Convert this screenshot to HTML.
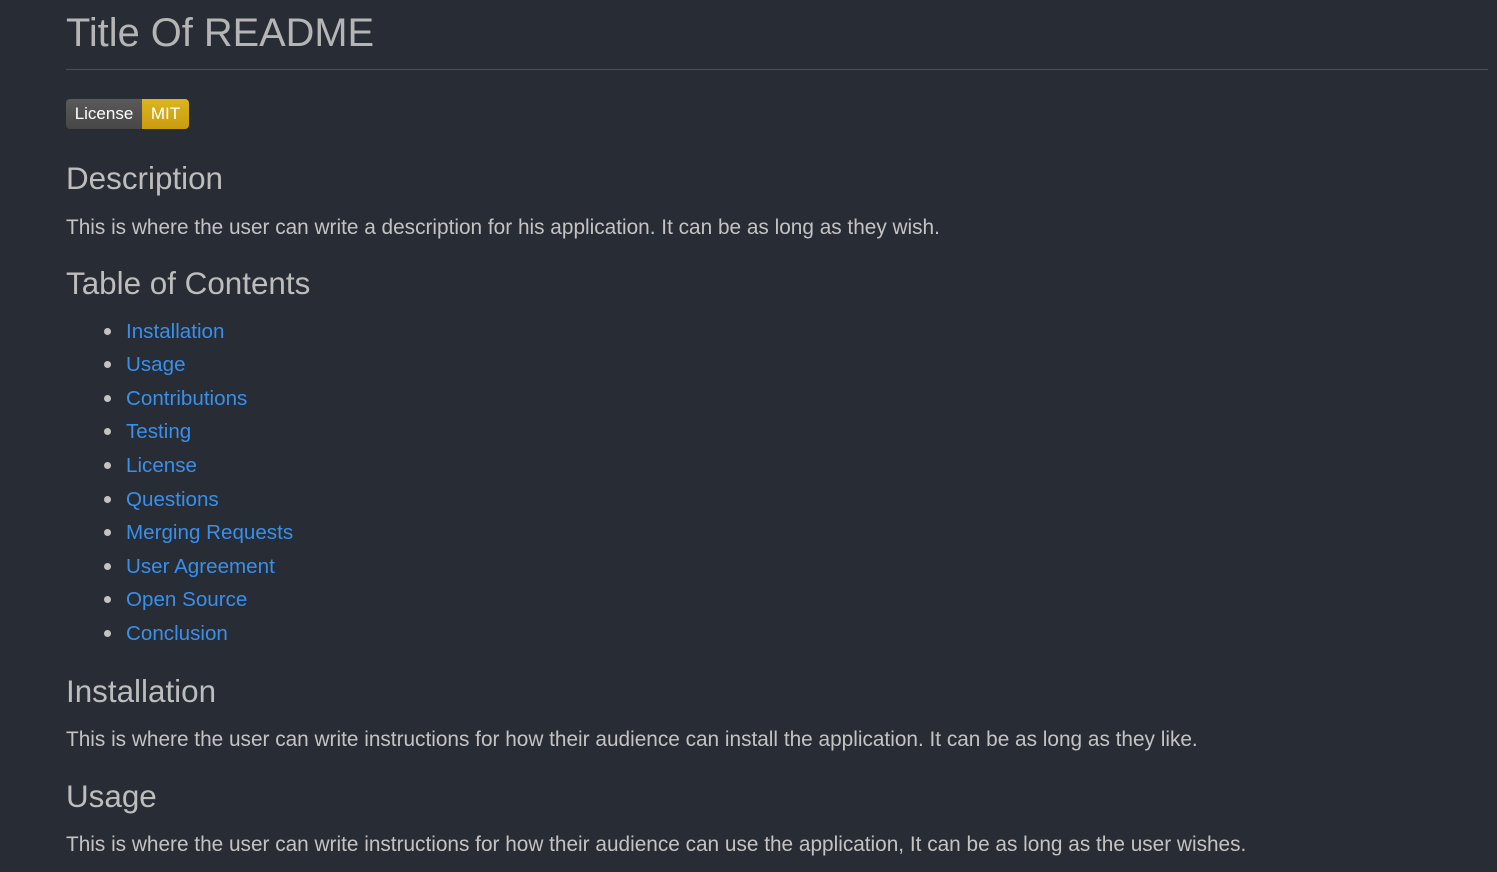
<!DOCTYPE html>
<html><head><meta charset="utf-8"><style>
body{margin:0;background:#282c35;width:1497px;height:872px;overflow:hidden;font-family:"Segoe UI","Liberation Sans",sans-serif;color:#c3c3c3;position:relative}
.a{position:absolute;left:66px;white-space:nowrap;line-height:1}
h1,h2{font-weight:400;margin:0;color:#bdbdbd}
.t{font-size:20.8px;color:#c3c3c3}
h2{font-size:31.4px}
.li{position:absolute;left:126px;font-size:20.6px;color:#3a8fe9;line-height:1;white-space:nowrap}
.dot{position:absolute;left:104px;width:7px;height:7px;border-radius:50%;background:#c3c3c3}
</style></head><body>
<h1 class="a" style="top:14px;font-size:39.8px;color:#b5b5b5">Title Of README</h1>
<div style="position:absolute;left:66px;top:69px;width:1422px;height:1px;background:#4a4f58"></div>
<div style="position:absolute;left:66px;top:99px;height:30px;width:123px;border-radius:4px;overflow:hidden;display:flex;font-size:17px;line-height:30px;color:#fff">
<div style="width:76px;background:linear-gradient(#5a5a5a,#474747);text-align:center">License</div>
<div style="width:47px;background:linear-gradient(#dbb51d,#c99c10);text-align:center">MIT</div></div>
<h2 class="a" style="top:163px">Description</h2>
<div class="a t" style="top:218px">This is where the user can write a description for his application. It can be as long as they wish.</div>
<h2 class="a" style="top:268px">Table of Contents</h2>
<div class="dot" style="top:328px"></div><div class="li" style="top:322px">Installation</div>
<div class="dot" style="top:361px"></div><div class="li" style="top:355px">Usage</div>
<div class="dot" style="top:395px"></div><div class="li" style="top:389px">Contributions</div>
<div class="dot" style="top:428px"></div><div class="li" style="top:422px">Testing</div>
<div class="dot" style="top:462px"></div><div class="li" style="top:456px">License</div>
<div class="dot" style="top:496px"></div><div class="li" style="top:490px">Questions</div>
<div class="dot" style="top:529px"></div><div class="li" style="top:523px">Merging Requests</div>
<div class="dot" style="top:563px"></div><div class="li" style="top:557px">User Agreement</div>
<div class="dot" style="top:596px"></div><div class="li" style="top:590px">Open Source</div>
<div class="dot" style="top:630px"></div><div class="li" style="top:624px">Conclusion</div>
<h2 class="a" style="top:676px">Installation</h2>
<div class="a t" style="top:730px">This is where the user can write instructions for how their audience can install the application. It can be as long as they like.</div>
<h2 class="a" style="top:781px">Usage</h2>
<div class="a t" style="top:835px">This is where the user can write instructions for how their audience can use the application, It can be as long as the user wishes.</div>
</body></html>
